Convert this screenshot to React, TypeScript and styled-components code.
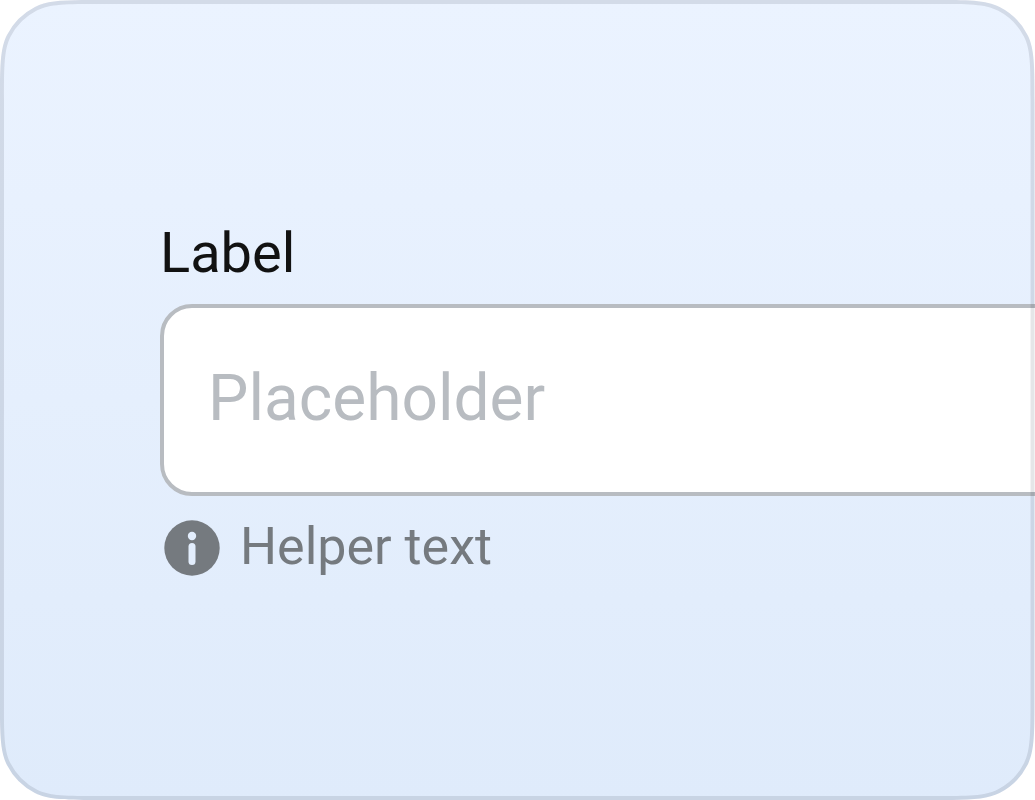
import React from 'react'
import styled, { createGlobalStyle } from 'styled-components'

const GlobalStyle = createGlobalStyle`
  *, *::before, *::after {
    box-sizing: border-box;
  }
  body {
    margin: 0;
    background: #ffffff;
    font-family: Roboto, 'Liberation Sans', sans-serif;
    overflow: hidden;
  }
`

// closed rounded rect with smoothed corners, s is the corner radius
const smoothRect = (x: number, y: number, w: number, h: number, s: number) => {
  const p = 1.6 * s
  const a = 0.561 * s
  const ab = 0.841 * s
  const abc = 1.055 * s
  const bc = 0.494 * s
  const c = 0.214 * s
  const d = 0.109 * s
  const k = 0.437 * s
  return [
    `M${x + w - p} ${y}`,
    `c${a} 0 ${ab} 0 ${abc} ${d} a${s} ${s} 0 0 1 ${k} ${k} c${d} ${c} ${d} ${bc} ${d} ${abc}`,
    `L${x + w} ${y + h - p}`,
    `c0 ${a} 0 ${ab} ${-d} ${abc} a${s} ${s} 0 0 1 ${-k} ${k} c${-c} ${d} ${-bc} ${d} ${-abc} ${d}`,
    `L${x + p} ${y + h}`,
    `c${-a} 0 ${-ab} 0 ${-abc} ${-d} a${s} ${s} 0 0 1 ${-k} ${-k} c${-d} ${-c} ${-d} ${-bc} ${-d} ${-abc}`,
    `L${x} ${y + p}`,
    `c0 ${-a} 0 ${-ab} ${d} ${-abc} a${s} ${s} 0 0 1 ${k} ${-k} c${c} ${-d} ${bc} ${-d} ${abc} ${-d}`,
    'Z',
  ].join(' ')
}

const outerShape = smoothRect(0, 0, 1034.5, 800, 64)
const innerShape = smoothRect(4, 4, 1026.5, 792, 60)

const Card = styled.main`
  position: relative;
  width: 1035px;
  height: 800px;
  padding: 220px 0 0 160px;
  overflow: hidden;

  &::before {
    content: '';
    position: absolute;
    inset: 0;
    z-index: -1;
    background: linear-gradient(180deg, #ebf3ff 0%, #e5effd 50%, #dfebfb 100%);
    clip-path: path('${outerShape}');
  }

  &::after {
    content: '';
    position: absolute;
    inset: 0;
    background: rgba(0, 8, 32, 0.1);
    clip-path: path(evenodd, '${outerShape} ${innerShape}');
    pointer-events: none;
  }
`

const Field = styled.div`
  display: flex;
  flex-direction: column;
  width: 1120px;
`

const Label = styled.label`
  height: 84px;
  padding-top: 1px;
  font-size: 56px;
  line-height: 64px;
  color: #121212;
`

const Input = styled.input`
  height: 192px;
  padding: 0 44px 4px;
  border: 4px solid #b8bcc1;
  border-radius: 32px;
  background: #ffffff;
  font-family: inherit;
  font-size: 64px;
  outline: none;

  &::placeholder {
    color: #b8bcc1;
    opacity: 1;
  }
`

const Helper = styled.div`
  display: flex;
  align-items: center;
  gap: 20px;
  height: 64px;
  margin-top: 20px;
  padding-left: 4px;
  color: #757a7f;
`

const HelperText = styled.span`
  padding-bottom: 2px;
  font-size: 52px;
  line-height: 62px;
`

const HelperIcon = styled.svg`
  flex: none;
  width: 56px;
  height: 56px;
`

const InfoIcon = () => (
  <HelperIcon viewBox='0 0 56 56' aria-hidden='true'>
    <circle cx='28' cy='28' r='27.7' fill='currentColor' />
    <circle cx='28' cy='16' r='4.2' fill='#e3eefd' />
    <rect x='24.5' y='23' width='7' height='22' rx='3.5' fill='#e3eefd' />
  </HelperIcon>
)

export default function App() {
  return (
    <>
      <GlobalStyle />
      <Card>
        <Field>
          <Label htmlFor='field'>Label</Label>
          <Input id='field' type='text' placeholder='Placeholder' />
          <Helper>
            <InfoIcon />
            <HelperText>Helper text</HelperText>
          </Helper>
        </Field>
      </Card>
    </>
  )
}
